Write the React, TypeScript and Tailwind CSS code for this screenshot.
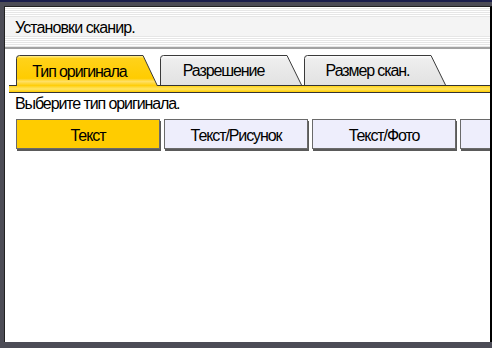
const tabs = [
  { id: 'type', label: 'Тип оригинала', active: true },
  { id: 'res', label: 'Разрешение', active: false },
  { id: 'size', label: 'Размер скан.', active: false },
];

const options = ['Текст', 'Текст/Рисунок', 'Текст/Фото', 'Фото'];

function Tab({ id, label, active }: { id: string; label: string; active: boolean }) {
  const grad = `tab-${id}`;
  const h = active ? 31 : 30;
  return (
    <div className={'relative w-[142px] shrink-0 ' + (active ? 'z-10 h-[31px] -mb-px' : 'h-[30px]')}>
      <svg className="absolute inset-0" width="142" height={h} aria-hidden="true">
        <defs>
          <linearGradient id={grad} x1="0" y1="0" x2="0" y2="1">
            {active ? (
              <>
                <stop offset="0" stopColor="#fff3a8" />
                <stop offset="0.1" stopColor="#ffd21a" />
                <stop offset="0.75" stopColor="#ffcc00" />
                <stop offset="0.85" stopColor="#ffe066" />
                <stop offset="1" stopColor="#ffcc00" />
              </>
            ) : (
              <>
                <stop offset="0" stopColor="#ffffff" />
                <stop offset="0.12" stopColor="#eeeeee" />
                <stop offset="1" stopColor="#e2e2e2" />
              </>
            )}
          </linearGradient>
        </defs>
        <path
          d={`M0.5,${h} V3.5 Q0.5,0.5 3.5,0.5 H127 L141.5,${h}`}
          fill={`url(#${grad})`}
          stroke="#3a3a3a"
          strokeWidth="1"
        />
      </svg>
      <span className="relative flex h-full items-center justify-center pr-[15px] pt-[2px] text-[16px] tracking-[-1.1px]">
        {label}
      </span>
    </div>
  );
}

export default function App() {
  return (
    <div className="h-[348px] w-[492px] overflow-hidden border-t-2 border-[#1b1f4d] bg-[#4c4c56] pt-[4px] pl-[4px] pb-[6px] font-['Liberation_Sans',Arial,sans-serif] text-[16px] tracking-[-1.1px] text-black">
      <div className="flex h-full flex-col overflow-hidden border-t border-l border-r-2 border-t-[#222] border-l-[#222] border-r-black bg-white">
        <div className="flex h-[42px] shrink-0 items-center border-b-2 border-[#a3a3a3] bg-[image:linear-gradient(to_bottom,transparent_10px,#f4f4f4_10px,#f4f4f4_29px,transparent_29px),repeating-linear-gradient(to_bottom,#ffffff_0px,#ffffff_1px,#e6e6e6_1px,#e6e6e6_2px)] pl-[10px] pt-[2px] tracking-[-0.9px]">
          Установки сканир.
        </div>

        <div className="mt-[6px] flex items-end gap-[2px] pl-[11px]">
          {tabs.map((t) => (
            <Tab key={t.id} {...t} />
          ))}
        </div>
        <div className="ml-[4px] h-[8px] shrink-0 border-y border-[#333] bg-[linear-gradient(to_bottom,#ffd21a,#ffe566_50%,#ffcc00)]" />

        <p className="mt-[2px] pl-[10px] leading-[18px]">Выберите тип оригинала.</p>

        <div className="mt-[6px] flex gap-[4px] pl-[11px]">
          {options.map((o, i) => (
            <button
              key={o}
              className={
                'h-[30px] w-[144px] shrink-0 border border-[#6a6a6a] pt-[3px] shadow-[1px_2px_0_#5a5a5a] ' +
                (i === 0 ? 'bg-[#ffcc00]' : 'bg-[#eeeefc]')
              }
            >
              {o}
            </button>
          ))}
        </div>
      </div>
    </div>
  );
}
